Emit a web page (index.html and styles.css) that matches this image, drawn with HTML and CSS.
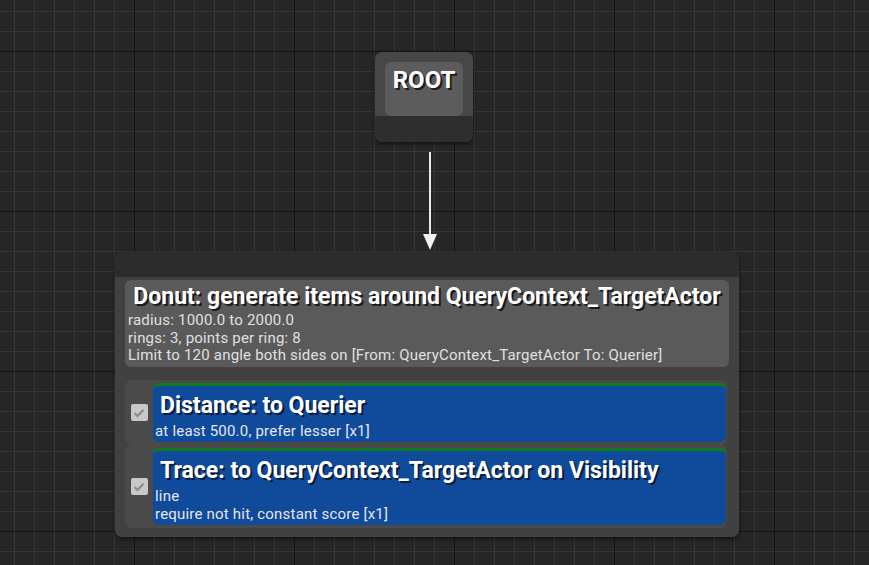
FILE: index.html
```html
<!DOCTYPE html>
<html>
<head>
<meta charset="utf-8">
<link rel="stylesheet" href="styles.css">
</head>
<body>
<div class="canvas">
  <div class="root-node">
    <div class="root-top"><div class="root-label">ROOT</div></div>
    <div class="root-bottom"></div>
  </div>

  <svg class="wire" width="20" height="100" viewBox="0 0 20 100">
    <line x1="10" y1="0" x2="10" y2="86" stroke="#e8e8e8" stroke-width="2"/>
    <polygon points="3,82 17,82 10,98" fill="#f0f0f0"/>
  </svg>

  <div class="gen-node">
    <div class="gen-bar"></div>
    <div class="gen-body">
      <div class="gen-header">
        <div class="gen-title">Donut: generate items around QueryContext_TargetActor</div>
        <div class="gen-lines">
          <div>radius: 1000.0 to 2000.0</div>
          <div>rings: 3, points per ring: 8</div>
          <div>Limit to 120 angle both sides on [From: QueryContext_TargetActor To: Querier]</div>
        </div>
      </div>
      <div class="tests">
        <div class="test-row">
          <div class="check-col"><span class="check"><svg width="12" height="10" viewBox="0 0 12 10"><path d="M1.5 5.2 L4.6 8 L10.5 1.8" fill="none" stroke="#8a8a8a" stroke-width="2.2"/></svg></span></div>
          <div class="test-card">
            <div class="test-title">Distance: to Querier</div>
            <div class="test-lines"><div>at least 500.0, prefer lesser [x1]</div></div>
          </div>
        </div>
        <div class="test-row">
          <div class="check-col"><span class="check"><svg width="12" height="10" viewBox="0 0 12 10"><path d="M1.5 5.2 L4.6 8 L10.5 1.8" fill="none" stroke="#8a8a8a" stroke-width="2.2"/></svg></span></div>
          <div class="test-card">
            <div class="test-title">Trace: to QueryContext_TargetActor on Visibility</div>
            <div class="test-lines"><div>line</div><div>require not hit, constant score [x1]</div></div>
          </div>
        </div>
      </div>
    </div>
  </div>
</div>
</body>
</html>
```
FILE: styles.css
```css
html, body {
  margin: 0;
  padding: 0;
}
body {
  font-family: Roboto, "Liberation Sans", sans-serif;
  background: #262626;
}
.canvas {
  position: relative;
  width: 869px;
  height: 565px;
  overflow: hidden;
  background-color: #262626;
  background-image:
    linear-gradient(to right, #141414 1px, transparent 1px),
    linear-gradient(to bottom, #141414 1px, transparent 1px),
    linear-gradient(to right, #363636 1px, transparent 1px),
    linear-gradient(to bottom, #363636 1px, transparent 1px);
  background-size: 160px 160px, 160px 160px, 20px 20px, 20px 20px;
  background-position: 134px 51px, 134px 51px, 14px 11px, 14px 11px;
}
.root-node {
  position: absolute;
  left: 375px;
  top: 52px;
  width: 98px;
  height: 90px;
  border-radius: 7px;
  overflow: hidden;
  display: flex;
  flex-direction: column;
  box-shadow: 0 2px 4px rgba(0,0,0,0.5);
}
.root-top {
  background: #474747;
  padding: 10px 10px 0 10px;
  height: 54px;
}
.root-label {
  background: #5c5c5c;
  border-radius: 6px;
  height: 54px;
  color: #fff;
  font-weight: bold;
  font-size: 24px;
  text-align: center;
  line-height: 36px;
  text-shadow: 2px 2px 0 #1c1c1c;
}
.root-bottom {
  flex: 1;
  background: #2e2e2e;
}
.wire {
  position: absolute;
  left: 420px;
  top: 152px;
}
.gen-node {
  position: absolute;
  left: 115px;
  top: 252px;
  width: 624px;
  height: 285px;
  border-radius: 7px;
  overflow: hidden;
  display: flex;
  flex-direction: column;
  box-shadow: 0 2px 4px rgba(0,0,0,0.5);
}
.gen-bar {
  height: 25px;
  background: #2c2c2c;
}
.gen-body {
  flex: 1;
  background: #414141;
  padding: 3px 10px 0 10px;
  display: flex;
  flex-direction: column;
}
.gen-header {
  background: #5a5a5a;
  border-radius: 6px;
  height: 87px;
  padding: 1px 3px 0 3px;
  box-sizing: border-box;
}
.gen-title {
  color: #fff;
  font-weight: bold;
  font-size: 23px;
  text-align: center;
  line-height: 31px;
  text-shadow: 2px 2px 0 #1a1a1a;
}
.gen-lines {
  color: #e0e0e0;
  font-size: 15px;
  letter-spacing: 0.2px;
  line-height: 17.5px;
}
.tests {
  margin-top: 13px;
  display: flex;
  flex-direction: column;
  gap: 0;
  width: 602px;
}
.test-row {
  display: flex;
  background: #4a4a4a;
  border-radius: 7px;
  padding: 3px 1px 3px 0;
}
.check-col {
  width: 28px;
  display: flex;
  align-items: center;
  justify-content: center;
}
.check {
  width: 17px;
  height: 17px;
  border-radius: 2px;
  background: #c8c8c8;
  display: flex;
  align-items: center;
  justify-content: center;
}
.test-card {
  flex: 1;
  background: #0f4a9b;
  border-radius: 6px;
  border-top: 3px solid #0e7a1c;
  padding: 4px 2px 1px 2px;
}
.test-card:last-child {
  padding-bottom: 2px;
}
.test-title {
  color: #fff;
  font-weight: bold;
  font-size: 23px;
  line-height: 32px;
  padding-left: 5px;
  text-shadow: 2px 2px 0 #081e3d;
}
.test-lines {
  color: #e6e6f0;
  font-size: 15px;
  letter-spacing: 0.2px;
  line-height: 18px;
}
```
